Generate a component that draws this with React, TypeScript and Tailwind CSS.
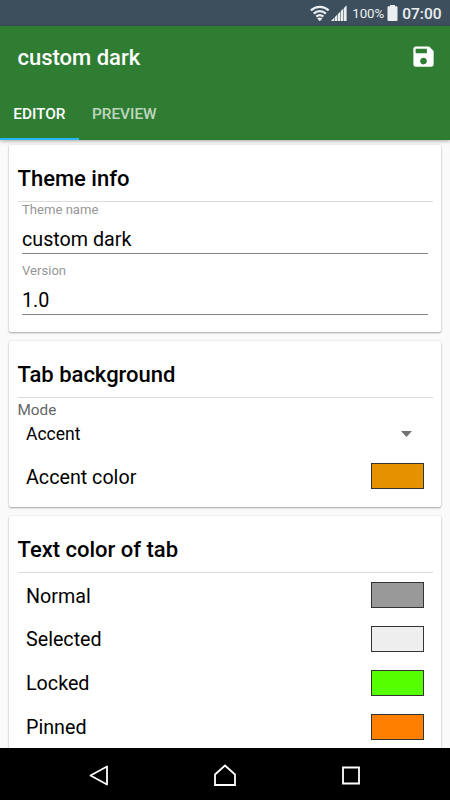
import { useState } from "react";
import type { ReactNode } from "react";

type ColorRowProps = {
  label: string;
  color: string;
};

type FieldProps = {
  label: string;
  value: string;
};

type SectionProps = {
  title: string;
  className?: string;
  children: ReactNode;
};

const tabs = ["EDITOR", "PREVIEW"];

const textColors = [
  { label: "Normal", color: "#999999" },
  { label: "Selected", color: "#eeeeee" },
  { label: "Locked", color: "#55ff00" },
  { label: "Pinned", color: "#ff8000" },
];

function StatusBar() {
  return (
    <div className="flex h-[26px] shrink-0 items-center justify-end bg-[#3d4f5d] pr-[8.5px] text-[#eceff1]">
      <svg width="20" height="17" viewBox="0 0 20 17" fill="none" stroke="currentColor" strokeWidth="2.3">
        <path d="M.9 5.4C6.2 .6 13.4 .6 18.7 5.4" />
        <path d="M3.7 8.6C7.3 5.3 12.3 5.3 15.9 8.6" />
        <path d="M6.3 11.7C8.5 9.7 11.1 9.7 13.3 11.7" />
        <path d="M7.2 13.5Q9.8 11.7 12.4 13.5L9.8 16.2Z" fill="currentColor" stroke="none" />
      </svg>
      <svg className="ml-[1px]" width="16" height="16" viewBox="0 0 16 16" fill="currentColor">
        <path d="M0 16L3 13V16ZM4 12L6 10V16H4ZM7 9L9 7V16H7ZM10 6L12 4V16H10ZM13 3L15.5 .4V16H13Z" />
        <path d="M0 16L15.5 .4V16Z" opacity=".4" />
      </svg>
      <span className="ml-[5px] w-[32px] pt-px text-[13.3px] leading-[26px] whitespace-nowrap">100%</span>
      <svg className="ml-[3px]" width="11" height="16" viewBox="0 0 11 16" fill="currentColor">
        <path d="M3 0H8V1.2H9.5Q10.5 1.2 10.5 2.2V15Q10.5 16 9.5 16H1.5Q.5 16 .5 15V2.2Q.5 1.2 1.5 1.2H3Z" />
      </svg>
      <span className="ml-[4px] pt-[2px] text-[15.5px] leading-[26px] font-medium">07:00</span>
    </div>
  );
}

function Section({ title, className = "", children }: SectionProps) {
  return (
    <section
      className={`shrink-0 rounded-[2px] bg-white shadow-[0_1px_2px_rgba(0,0,0,0.32),0_0_2px_rgba(0,0,0,0.1)] ${className}`}
    >
      <h2 className="mx-[8.5px] h-[57px] border-b border-[#dcdcdc] pt-[11px] text-[22px] leading-[45px] font-medium">
        {title}
      </h2>
      {children}
    </section>
  );
}

function Field({ label, value }: FieldProps) {
  return (
    <label className="mx-[13px] block">
      <span className="block text-[13.1px] leading-[15px] text-[#969696]">{label}</span>
      <input
        className="mt-[8px] block h-[29px] w-full border-b border-[#858585] text-[19.7px] leading-[28px] outline-none"
        defaultValue={value}
      />
    </label>
  );
}

function ColorRow({ label, color }: ColorRowProps) {
  return (
    <div className="flex h-[43.75px] items-center justify-between px-[17px] text-[19.7px]">
      <span className="pt-px">{label}</span>
      <button
        className="mb-px h-[26px] w-[53px] border border-[#333]"
        style={{ backgroundColor: color }}
        aria-label={label}
      />
    </div>
  );
}

export default function App() {
  const [activeTab, setActiveTab] = useState("EDITOR");

  return (
    <div className="flex h-[800px] w-[450px] flex-col overflow-hidden bg-[#fafafa] font-[Roboto,sans-serif] text-black">
      <StatusBar />

      <header className="relative z-10 flex h-[114px] shrink-0 flex-col bg-[#2f7d32] text-white shadow-[0_1px_4px_rgba(0,0,0,0.35)]">
        <div className="flex h-[63px] items-center justify-between pr-[13px] pl-[17.5px]">
          <h1 className="text-[22px] leading-[63px] font-medium">custom dark</h1>
          <button className="pb-[2px]" aria-label="Save">
            <svg width="27" height="27" viewBox="0 0 24 24" fill="currentColor">
              <path d="M17 3H5C3.89 3 3 3.9 3 5V19C3 20.1 3.89 21 5 21H19C20.1 21 21 20.1 21 19V7L17 3ZM12 19C10.34 19 9 17.66 9 16S10.34 13 12 13 15 14.34 15 16 13.66 19 12 19ZM15 9H5V5H15V9Z" />
            </svg>
          </button>
        </div>
        <nav className="flex h-[51px]">
          {tabs.map((tab) => (
            <button
              key={tab}
              onClick={() => setActiveTab(tab)}
              className={`border-b-2 px-[13.2px] pt-[2px] text-[15.4px] font-medium ${
                activeTab === tab ? "border-[#29b6f6] text-white" : "border-transparent text-white/70"
              }`}
            >
              {tab}
            </button>
          ))}
        </nav>
      </header>

      <main className="flex min-h-0 flex-1 flex-col gap-[9px] overflow-hidden px-[9px] pt-[5px]">
        <Section title="Theme info" className="h-[187px]">
          <div className="flex flex-col gap-[9px]">
            <Field label="Theme name" value="custom dark" />
            <Field label="Version" value="1.0" />
          </div>
        </Section>

        <Section title="Tab background" className="h-[166px]">
          <div className="px-[8.5px] text-[15.3px] leading-[24px] text-[#666]">Mode</div>
          <div className="flex h-[23px] items-center justify-between pr-[29px] pl-[17px] text-[17.5px]">
            <span className="pt-px">Accent</span>
            <svg width="11" height="6" viewBox="0 0 11 6" fill="#737373">
              <path d="M0 0H11L5.5 6Z" />
            </svg>
          </div>
          <div className="pt-[10px]">
            <ColorRow label="Accent color" color="#e69200" />
          </div>
        </Section>

        <Section title="Text color of tab" className="h-[260px]">
          <div className="pt-px">
            {textColors.map((row) => (
              <ColorRow key={row.label} label={row.label} color={row.color} />
            ))}
          </div>
        </Section>
      </main>

      <footer className="relative z-10 flex h-[52px] shrink-0 items-center justify-center gap-[102px] bg-black pt-[3px] text-white">
        <svg width="24" height="24" viewBox="0 0 24 24" fill="none" stroke="currentColor" strokeWidth="1.8" strokeLinejoin="round">
          <path d="M20 2.5V20.5L3.5 11.5Z" />
        </svg>
        <svg width="24" height="24" viewBox="0 0 24 24" fill="none" stroke="currentColor" strokeWidth="1.8">
          <path d="M2 21V10.5L12 1.5L22 10.5V21Z" />
        </svg>
        <svg width="24" height="24" viewBox="0 0 24 24" fill="none" stroke="currentColor" strokeWidth="1.8">
          <path d="M4 3.5H20V19.5H4Z" />
        </svg>
      </footer>
    </div>
  );
}
